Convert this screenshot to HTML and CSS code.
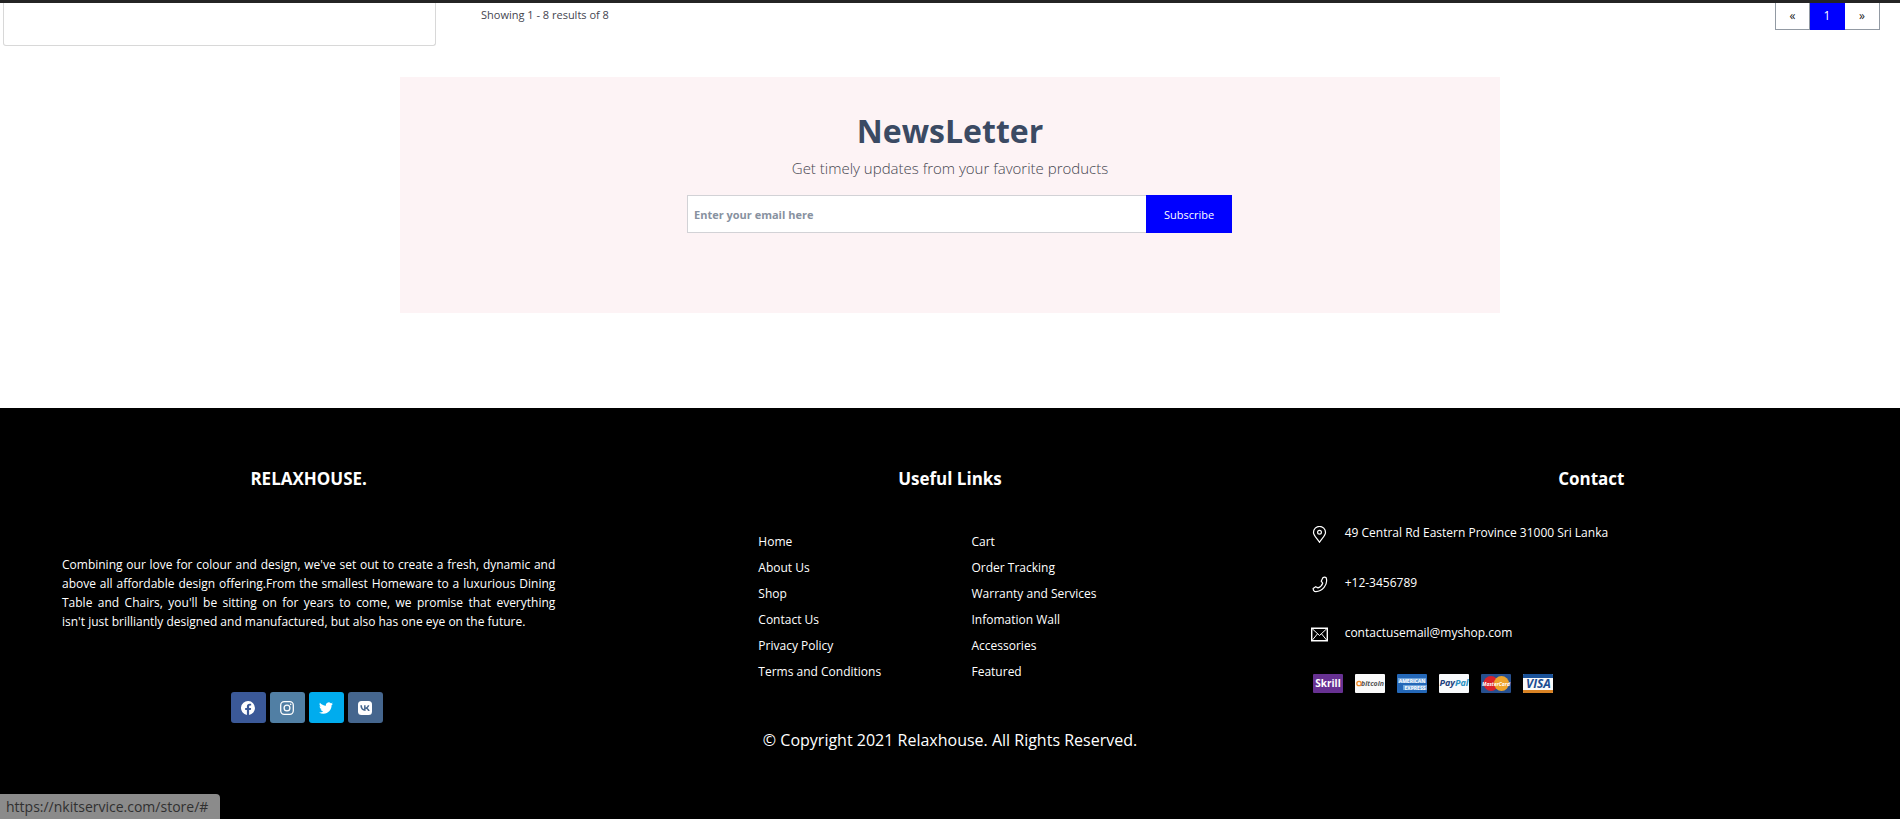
FILE: index.html
```html
<!DOCTYPE html>
<html lang="en">
<head>
<meta charset="utf-8">
<meta name="viewport" content="width=device-width, initial-scale=1">
<title>Relaxhouse Store</title>
<link rel="stylesheet" href="styles.css">
</head>
<body>
<main class="store">
  <aside class="filters" aria-label="Filters"></aside>
  <div class="results">
    <p class="results-count">Showing 1 - 8 results of 8</p>
    <nav class="pagination" aria-label="Pages">
      <a class="page" href="#">«</a>
      <a class="page page-current" href="#">1</a>
      <a class="page" href="#">»</a>
    </nav>
  </div>
</main>

<section class="newsletter">
  <h1 class="newsletter-title">NewsLetter</h1>
  <p class="newsletter-text">Get timely updates from your favorite products</p>
  <form class="subscribe">
    <input class="subscribe-input" type="email" placeholder="Enter your email here" aria-label="Email address">
    <button class="subscribe-button" type="button">Subscribe</button>
  </form>
</section>

<footer class="footer">
  <div class="footer-columns">
    <section class="footer-column">
      <h2 class="footer-title">RELAXHOUSE.</h2>
      <p class="about">Combining our love for colour and design, we've set out to create a fresh, dynamic and above all affordable design offering.From the smallest Homeware to a luxurious Dining Table and Chairs, you'll be sitting on for years to come, we promise that everything isn't&nbsp;just brilliantly designed and manufactured, but also has one eye on the future.</p>
      <div class="social">
        <a class="social-link facebook" href="#" aria-label="Facebook">
          <svg viewBox="0 0 24 24" width="14" height="14"><path fill="#fff" d="M24 12a12 12 0 1 0-13.900 11.900v-8.400H7.100V12h3V9.400c0-3 1.800-4.700 4.600-4.700 1.300 0 2.700.2 2.700.2v3h-1.500c-1.500 0-2 .9-2 1.900V12h3.400l-.5 3.500h-2.900v8.400A12 12 0 0 0 24 12z"/></svg>
        </a>
        <a class="social-link instagram" href="#" aria-label="Instagram">
          <svg viewBox="0 0 24 24" width="14" height="14" fill="none" stroke="#fff" stroke-width="2.200"><rect x="1.200" y="1.200" width="21.600" height="21.600" rx="6"/><circle cx="12" cy="12" r="5"/><circle cx="18.300" cy="5.700" r="1.400" fill="#fff" stroke="none"/></svg>
        </a>
        <a class="social-link twitter" href="#" aria-label="Twitter">
          <svg viewBox="0 0 24 24" width="14" height="14"><path fill="#fff" d="M23.950 4.570a10 10 0 0 1-2.820.770 4.960 4.960 0 0 0 2.160-2.720c-.950.550-2 .950-3.130 1.180a4.920 4.920 0 0 0-8.380 4.480C7.690 8.090 4.070 6.130 1.640 3.160a4.820 4.820 0 0 0-.670 2.480c0 1.710.870 3.210 2.190 4.100a4.900 4.900 0 0 1-2.230-.620v.060a4.920 4.920 0 0 0 3.950 4.830 5 5 0 0 1-2.210.080 4.940 4.940 0 0 0 4.600 3.420A9.870 9.870 0 0 1 0 19.540a14 14 0 0 0 7.550 2.210c9.050 0 14-7.500 14-13.980 0-.210 0-.420-.020-.630a9.940 9.940 0 0 0 2.460-2.550z"/></svg>
        </a>
        <a class="social-link vk" href="#" aria-label="VK">
          <svg viewBox="0 0 24 24" width="14" height="14"><rect width="24" height="24" rx="6" fill="#fff"/><path fill="#45668e" d="M12.900 17C7.400 17 4.200 13.300 4 7.200h2.800c.1 4.500 2 6.400 3.600 6.800V7.200H13v3.900c1.600-.2 3.300-2 3.800-3.900h2.600c-.4 2.300-2.200 4.100-3.400 4.800 1.200.6 3.200 2.100 4 5h-2.900c-.6-1.900-2.200-3.400-4.100-3.600V17z"/></svg>
        </a>
      </div>
    </section>

    <section class="footer-column">
      <h2 class="footer-title">Useful Links</h2>
      <div class="links">
        <ul class="link-list">
          <li><a href="#">Home</a></li>
          <li><a href="#">About Us</a></li>
          <li><a href="#">Shop</a></li>
          <li><a href="#">Contact Us</a></li>
          <li><a href="#">Privacy Policy</a></li>
          <li><a href="#">Terms and Conditions</a></li>
        </ul>
        <ul class="link-list">
          <li><a href="#">Cart</a></li>
          <li><a href="#">Order Tracking</a></li>
          <li><a href="#">Warranty and Services</a></li>
          <li><a href="#">Infomation Wall</a></li>
          <li><a href="#">Accessories</a></li>
          <li><a href="#">Featured</a></li>
        </ul>
      </div>
    </section>

    <section class="footer-column">
      <h2 class="footer-title">Contact</h2>
      <ul class="contact">
        <li class="contact-item">
          <svg viewBox="0 0 17 17" width="17" height="17" fill="none" stroke="#fff" stroke-width="1.200"><path d="M8.500 16.300C6.500 12.800 2.500 9.500 2.500 6.400a6 6 0 0 1 12 0c0 3.100-4 6.400-6 9.900z"/><circle cx="8.500" cy="6.300" r="1.900"/></svg>
          <span>49 Central Rd Eastern Province 31000 Sri Lanka</span>
        </li>
        <li class="contact-item">
          <svg viewBox="0 0 17 17" width="17" height="17" fill="none" stroke="#fff" stroke-width="1.200" stroke-linejoin="round"><path d="M12 1.600c.9-.4 2.500-.4 3.200.2.800 2.700.3 6.700-2.100 9.600-2.500 2.900-6.200 4.500-9.500 4.100-.9-.7-1.500-1.900-1.500-3l2.600-1.800 2.300 1.200c2.200-.8 4-2.500 4.700-4.700l-1.500-2z"/></svg>
          <span>+12-3456789</span>
        </li>
        <li class="contact-item">
          <svg viewBox="0 0 17 17" width="17" height="17" fill="none" stroke="#fff"><path stroke-width="1.400" d="M.7 2.200h15.600v12.600H.7z"/><path d="M1 2.500l7.500 7 7.500-7M1 14.500l5.500-6.700M16 14.500l-5.500-6.700"/></svg>
          <span>contactusemail@myshop.com</span>
        </li>
      </ul>
      <div class="cards">
        <svg class="card" viewBox="0 0 30 19" role="img" aria-label="Skrill"><rect width="30" height="19" rx="1" fill="#673192"/><text class="card-name skrill" x="15" y="13">Skrill</text></svg>
        <svg class="card" viewBox="0 0 30 19" role="img" aria-label="Bitcoin"><rect width="30" height="19" rx="1" fill="#fafafa"/><circle cx="4" cy="9.500" r="2.200" fill="none" stroke="#f08a24" stroke-width="1.300"/><text class="card-name bitcoin" x="17.500" y="12">bitcoin</text></svg>
        <svg class="card" viewBox="0 0 30 19" role="img" aria-label="American Express"><rect width="30" height="19" rx="1" fill="#2468b8"/><path d="M1 4h28v5H1zM6 11h24v5H6z" fill="#6ea3da"/><text class="card-name amex" x="15" y="8.500">AMERICAN</text><text class="card-name amex" x="18" y="15.500">EXPRESS</text></svg>
        <svg class="card" viewBox="0 0 30 19" role="img" aria-label="PayPal"><rect width="30" height="19" rx="1" fill="#f8fafc"/><text class="card-name paypal" x="15" y="12">Pay<tspan fill="#2790c3">Pal</tspan></text></svg>
        <svg class="card" viewBox="0 0 30 19" role="img" aria-label="MasterCard"><rect width="30" height="19" rx="1" fill="#27508f"/><circle cx="10" cy="9.500" r="7.500" fill="#d9222a"/><circle cx="20.500" cy="9.500" r="7.500" fill="#eea42b"/><text class="card-name mastercard" x="15" y="11.500">MasterCard</text></svg>
        <svg class="card" viewBox="0 0 30 19" role="img" aria-label="Visa"><rect width="30" height="19" rx="1" fill="#fafafa"/><path d="M0 4V1q0-1 1-1h28q1 0 1 1v3z" fill="#1a5299"/><path d="M0 16h30v2q0 1-1 1H1q-1 0-1-1z" fill="#d98324"/><text class="card-name visa" x="15.500" y="14">VISA</text></svg>
      </div>
    </section>
  </div>
  <p class="copyright">© Copyright 2021 Relaxhouse. All Rights Reserved.</p>
</footer>
<div class="status">https://nkitservice.com/store/#</div>
</body>
</html>
```
FILE: styles.css
```css
* {
  box-sizing: border-box;
}

body {
  margin: 0;
  min-height: 100vh;
  display: flex;
  flex-direction: column;
  border-top: 3px solid #242424;
  background: #fff;
  color: #45454f;
  font-family: "Segoe UI", "Open Sans", sans-serif;
  font-size: 12px;
}

h1, h2, p, ul {
  margin: 0;
  padding: 0;
}

ul {
  list-style: none;
}

a {
  color: inherit;
  text-decoration: none;
}

.store {
  display: flex;
  align-items: flex-start;
  padding: 0 20px 0 3px;
}

.filters {
  width: 433px;
  height: 43px;
  border: 1px solid #d8d8d8;
  border-top: 0;
  border-radius: 0 0 3px 3px;
}

.results {
  flex: 1;
  display: flex;
  justify-content: space-between;
  margin-left: 45px;
}

.results-count {
  font-size: 11px;
  line-height: 24px;
}

.pagination {
  display: flex;
}

.page {
  width: 35px;
  height: 27px;
  border: solid #929aa3;
  border-width: 0 1px 1px 0;
  color: #222;
  line-height: 26px;
  text-align: center;
}

.page:first-child {
  border-left-width: 1px;
}

.page-current {
  border-color: #00f;
  background: #00f;
  color: #fff;
}

.newsletter {
  width: 100%;
  max-width: 1100px;
  margin: 31px auto 95px;
  padding: 30px 0 80px;
  background: #fdf3f5;
  text-align: center;
}

.newsletter-title {
  color: #3b4a63;
  font-size: 32px;
  line-height: 48px;
}

.newsletter-text {
  font-size: 15px;
  font-weight: 300;
  line-height: 26px;
}

.subscribe {
  display: flex;
  width: 564px;
  max-width: 100%;
  height: 38px;
  margin: 14px auto 0;
  padding-left: 19px;
}

.subscribe-input {
  flex: 1;
  min-width: 0;
  padding: 0 6px;
  border: 1px solid #d2d2d6;
  border-right: 0;
  background: #fff;
  font: bold 11px "Segoe UI", "Open Sans", sans-serif;
}

.subscribe-input::placeholder {
  color: #8791a0;
  opacity: 1;
}

.subscribe-button {
  width: 86px;
  border: 0;
  background: #00f;
  color: #fff;
  font: 11px "Segoe UI", "Open Sans", sans-serif;
}

.footer {
  flex: 1;
  padding: 58px 62px 64px;
  background: #000;
  color: #fff;
}

.footer-columns {
  display: grid;
  grid-template-columns: repeat(3, 1fr);
  column-gap: 148px;
}

.footer-title {
  font-size: 17px;
  line-height: 26px;
  text-align: center;
}

.about {
  margin-top: 63px;
  font-size: 12px;
  line-height: 19px;
  text-align: justify;
}

.social {
  display: flex;
  justify-content: center;
  gap: 4px;
  margin-top: 61px;
  padding-right: 4px;
}

.social-link {
  display: flex;
  align-items: center;
  justify-content: center;
  width: 35px;
  height: 31px;
  border-radius: 3px;
}

.facebook {
  background: #3b5998;
}

.instagram {
  background: #517fa4;
}

.twitter {
  background: #00acee;
}

.vk {
  background: #45668e;
}

.links {
  display: grid;
  grid-template-columns: 1fr 1fr;
  margin-top: 37px;
  padding: 0 12px 0 55px;
}

.link-list {
  line-height: 26px;
}

.contact {
  display: grid;
  gap: 30px;
  margin: 31px -34px 0;
}

.contact-item {
  display: flex;
  gap: 17px;
  line-height: 20px;
}

.contact-item svg {
  margin-top: 3px;
}

.cards {
  display: flex;
  gap: 12px;
  margin: 31px -32px 0;
}

.card {
  width: 30px;
  height: 19px;
}

.card-name {
  font-family: "Open Sans", sans-serif;
  font-weight: bold;
  text-anchor: middle;
}

.skrill {
  fill: #fff;
  font-size: 10px;
}

.bitcoin {
  fill: #555;
  font-size: 7px;
  font-style: italic;
}

.amex {
  fill: #fff;
  font-size: 5px;
}

.paypal {
  fill: #1c3f7d;
  font-size: 9px;
  font-style: italic;
}

.mastercard {
  fill: #fff;
  font-size: 5px;
  font-style: italic;
}

.visa {
  fill: #1a4c92;
  font-size: 12px;
  font-style: italic;
}

.copyright {
  margin-top: 5px;
  font-size: 16px;
  line-height: 24px;
  text-align: center;
}

.status {
  position: fixed;
  bottom: 0;
  left: 0;
  padding: 1px 12px 0 6px;
  border-top-right-radius: 4px;
  background: #8b8b8b;
  color: #303030;
  font-size: 14px;
  line-height: 24px;
}
```
